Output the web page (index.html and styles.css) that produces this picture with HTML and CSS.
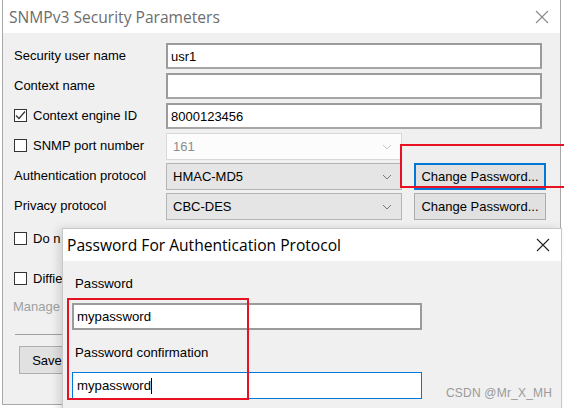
FILE: index.html
```html
<!DOCTYPE html>
<html lang="en">
<head>
    <meta charset="UTF-8">
    <title>SNMPv3 Security Parameters</title>
    <link rel="stylesheet" href="styles.css">
</head>
<body>
    <div class="desk">
        <div class="win main">
            <div class="titlebar">
                <span class="title">SNMPv3 Security Parameters</span>
                <svg class="close" width="14" height="14" viewBox="0 0 14 14"><path d="M1 1L13 13M13 1L1 13" stroke="#8a8a8a" stroke-width="1.1" fill="none"/></svg>
            </div>
            <div class="body">
                <div class="form">
                    <div class="label">Security user name</div>
                    <div class="edit wide">usr1</div>

                    <div class="label">Context name</div>
                    <div class="edit wide"></div>

                    <div class="label"><span class="check on"><svg width="11" height="11" viewBox="0 0 11 11"><path d="M1 5.5L4 8.5L10 1.5" stroke="#333" stroke-width="1.2" fill="none"/></svg></span>Context engine ID</div>
                    <div class="edit wide">8000123456</div>

                    <div class="label"><span class="check"></span>SNMP port number</div>
                    <div class="combo disabled">161<svg class="chev" width="10" height="6" viewBox="0 0 10 6"><path d="M1 1L5 5L9 1" stroke="#c8c8c8" fill="none"/></svg></div>
                    <div></div>
                    <div></div>

                    <div class="label">Authentication protocol</div>
                    <div class="combo">HMAC-MD5<svg class="chev" width="10" height="6" viewBox="0 0 10 6"><path d="M1 1L5 5L9 1" stroke="#777" fill="none"/></svg></div>
                    <div></div>
                    <div class="btn focus">Change Password...</div>

                    <div class="label">Privacy protocol</div>
                    <div class="combo">CBC-DES<svg class="chev" width="10" height="6" viewBox="0 0 10 6"><path d="M1 1L5 5L9 1" stroke="#777" fill="none"/></svg></div>
                    <div></div>
                    <div class="btn">Change Password...</div>
                </div>

                <div class="label opt first"><span class="check"></span>Do n</div>
                <div class="label opt second"><span class="check"></span>Diffie</div>
                <div class="label muted">Manage</div>
                <div class="sep"></div>
                <div class="btn save">Save</div>
            </div>
        </div>

        <div class="win pass">
            <div class="titlebar">
                <span class="title">Password For Authentication Protocol</span>
                <svg class="close" width="14" height="14" viewBox="0 0 14 14"><path d="M1 1L13 13M13 1L1 13" stroke="#222" stroke-width="1.1" fill="none"/></svg>
            </div>
            <div class="body">
                <div class="plabel">Password</div>
                <div class="pedit">mypassword</div>
                <div class="plabel">Password confirmation</div>
                <div class="pedit active">mypassword<span class="caret"></span></div>
            </div>
        </div>

        <div class="mark mark-btn"></div>
        <div class="mark mark-pass"></div>
        <div class="watermark">CSDN @Mr_X_MH</div>
    </div>
</body>
</html>
```

FILE: styles.css
```css
body {
    margin: 0;
    background: #fff;
    font: 13px "Liberation Sans", Arial, sans-serif;
    color: #000;
}
.desk {
    position: relative;
    width: 564px;
    height: 408px;
    overflow: hidden;
}
.win {
    position: absolute;
    background: #f0f0f0;
    border: 1px solid #a8a8a8;
    display: flex;
    flex-direction: column;
}
.titlebar {
    background: #fff;
    display: flex;
    align-items: center;
    justify-content: space-between;
    font-family: "Open Sans", "Noto Sans", sans-serif;
    font-size: 15.6px;
}

/* main dialog */
.main {
    left: 2px;
    top: -1px;
    width: 557px;
    height: 404px;
}
.main .titlebar {
    height: 33px;
    padding: 0 11px 0 6px;
    color: #6d6d6d;
}
.main .body {
    padding: 10px 0 0 11px;
}
.form {
    display: grid;
    grid-template-columns: 152px 236px 12px 132px;
    grid-auto-rows: 27px;
    row-gap: 3px;
}
.label {
    display: flex;
    align-items: center;
    white-space: nowrap;
}
.form .label {
    padding-bottom: 3px;
}
.check {
    width: 13px;
    height: 13px;
    border: 1px solid #333;
    background: #fff;
    margin-right: 6px;
    display: flex;
    align-items: center;
    justify-content: center;
    box-sizing: border-box;
}
.edit {
    background: #fff;
    border: 2px solid #9b9b9b;
    border-bottom-color: #a6a6a6;
    padding: 0 3px;
    display: flex;
    align-items: center;
    height: 26px;
    box-sizing: border-box;
}
.wide {
    grid-column: 2 / span 3;
    width: 376px;
}
.combo {
    background: #e5e5e5;
    border: 1px solid #b4b4b4;
    padding: 0 6px;
    display: flex;
    align-items: center;
    justify-content: space-between;
    height: 27px;
    box-sizing: border-box;
}
.combo.disabled {
    background: #fcfcfc;
    border-color: #d9d9d9;
    color: #8c8c8c;
}
.chev {
    margin-right: 3px;
}
.btn {
    background: #e1e1e1;
    border: 1px solid #adadad;
    display: flex;
    align-items: center;
    justify-content: center;
    height: 27px;
    box-sizing: border-box;
}
.btn.focus {
    border: 2px solid #0078d7;
}
.opt.first {
    margin-top: 11px;
    height: 14px;
}
.opt.second {
    margin-top: 26px;
    height: 14px;
}
.muted {
    color: #a0a0a0;
    margin-top: 14px;
    margin-left: -1px;
}
.sep {
    height: 1px;
    background: #a0a0a0;
    margin: 20px 0 0 1px;
    width: 540px;
}
.save {
    width: 56px;
    margin: 11px 0 0 5px;
    height: 28px;
}

/* password dialog */
.pass {
    left: 62px;
    top: 228px;
    width: 498px;
    height: 200px;
    border-color: #c8c8c8;
    box-shadow: -4px 0 8px rgba(0, 0, 0, 0.12);
}
.pass .titlebar {
    height: 32px;
    padding: 0 11px 0 4px;
    color: #000;
}
.pass .body {
    padding: 14px 0 0 9px;
    font-size: 13.2px;
}
.plabel {
    margin-left: 3px;
    height: 18px;
    line-height: 18px;
}
.pedit {
    width: 350px;
    height: 27px;
    box-sizing: border-box;
    background: #fff;
    border: 2px solid #9b9b9b;
    margin: 10px 0 14px;
    padding: 0 3px;
    display: flex;
    align-items: center;
}
.pedit.active {
    border: 1px solid #0078d7;
    padding: 0 4px;
    margin-bottom: 0;
}
.caret {
    width: 1px;
    height: 16px;
    background: #000;
}

/* annotations */
.mark {
    position: absolute;
    border: 2px solid #e81123;
}
.mark-btn {
    left: 400px;
    top: 144px;
    width: 170px;
    height: 40px;
}
.mark-pass {
    left: 67px;
    top: 298px;
    width: 178px;
    height: 98px;
}
.watermark {
    position: absolute;
    left: 446px;
    top: 386px;
    color: #9a9a9a;
    font-size: 12px;
    letter-spacing: 0.2px;
}
```
